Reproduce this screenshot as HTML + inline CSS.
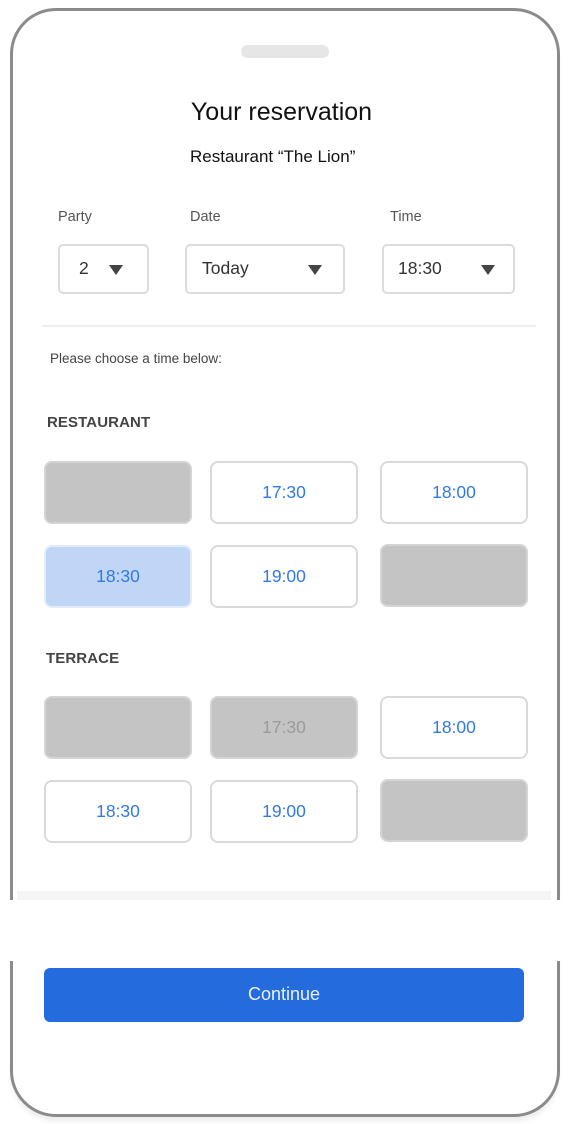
<!DOCTYPE html>
<html><head><meta charset="utf-8">
<style>
*{margin:0;padding:0;box-sizing:border-box}
body{width:568px;height:1124px;background:#fff;position:relative;overflow:hidden;font-family:"Liberation Sans",Roboto,Arial,sans-serif}
.a{position:absolute}
.frame{left:10px;top:8px;width:550px;height:1109px;border:3px solid #8b8b8b;border-radius:46px;background:#fff;box-shadow:0 6px 6px -2px rgba(0,0,0,0.08)}
.pill{left:241px;top:45px;width:88px;height:13px;border-radius:7px;background:#e6e6e6}
.lbl{font-size:14.5px;color:#555}
.dd{border:2px solid #dcdcdc;border-radius:5px;height:50px;top:244px;font-size:17.5px;color:#333}
.dd span{position:absolute;top:12px}
.tri{position:absolute;top:19px;width:0;height:0;border-left:7px solid transparent;border-right:7px solid transparent;border-top:10px solid #444}
.hd{font-size:15px;font-weight:bold;color:#444;letter-spacing:.1px}
.b{width:148px;height:63px;border:2px solid #dadada;border-radius:8px;background:#fff;color:#2f7ae5;font-size:17.5px;text-align:center;line-height:59px}
.g{background:#c4c4c4;border-color:#d4d4d4;color:#9a9a9a}
.s{background:#bfd6f6;border-color:#e3ecf8;color:#2f7ae5}
</style></head><body>
<div class="a frame"></div>
<div class="a pill"></div>
<div class="a" style="left:0;width:563px;top:98px;text-align:center;font-size:25px;color:#111">Your reservation</div>
<div class="a" style="left:190px;top:147px;font-size:17px;color:#111">Restaurant “The Lion”</div>
<div class="a lbl" style="left:58px;top:209px">Party</div>
<div class="a lbl" style="left:190px;top:209px">Date</div>
<div class="a lbl" style="left:390px;top:209px">Time</div>
<div class="a dd" style="left:58px;width:91px"><span style="left:19px">2</span><div class="tri" style="left:49px"></div></div>
<div class="a dd" style="left:185px;width:160px"><span style="left:15px">Today</span><div class="tri" style="left:121px"></div></div>
<div class="a dd" style="left:382px;width:133px"><span style="left:14px">18:30</span><div class="tri" style="left:97px"></div></div>
<div class="a" style="left:42px;top:325px;width:494px;height:2px;background:#f0f0f0"></div>
<div class="a" style="left:50px;top:351px;font-size:13.5px;color:#444">Please choose a time below:</div>
<div class="a hd" style="left:47px;top:414px">RESTAURANT</div>
<div class="a b g" style="left:44px;top:461px"></div>
<div class="a b" style="left:210px;top:461px">17:30</div>
<div class="a b" style="left:380px;top:461px">18:00</div>
<div class="a b s" style="left:44px;top:545px">18:30</div>
<div class="a b" style="left:210px;top:545px">19:00</div>
<div class="a b g" style="left:380px;top:544px"></div>
<div class="a hd" style="left:46px;top:650px">TERRACE</div>
<div class="a b g" style="left:44px;top:696px"></div>
<div class="a b g" style="left:210px;top:696px">17:30</div>
<div class="a b" style="left:380px;top:696px">18:00</div>
<div class="a b" style="left:44px;top:780px">18:30</div>
<div class="a b" style="left:210px;top:780px">19:00</div>
<div class="a b g" style="left:380px;top:779px"></div>
<div class="a" style="left:17px;top:891px;width:534px;height:9px;background:#f5f5f5"></div>
<div class="a" style="left:0;top:900px;width:568px;height:61px;background:#fff"></div>
<div class="a" style="left:44px;top:968px;width:480px;height:54px;border-radius:6px;background:#246bdd;color:#eaf1ff;font-size:18px;text-align:center;line-height:52px">Continue</div>
</body></html>
